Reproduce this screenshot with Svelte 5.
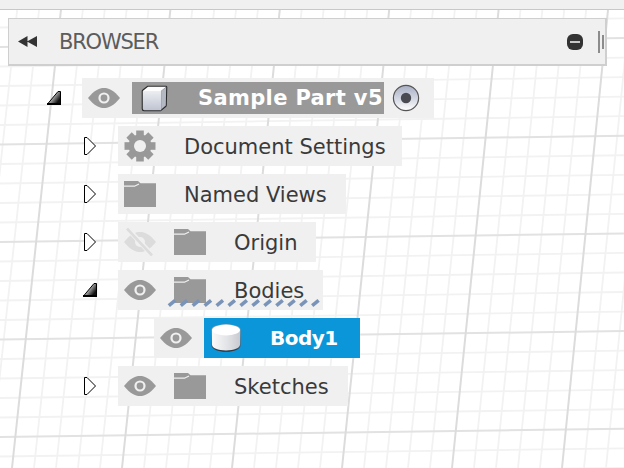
<script>
  const W = 624, H = 468;
  const vert = [];
  for (let i = -5; i <= 35; i++) {
    vert.push({ x1: 62 + (109.4 * i) / 5, y1: 0, x2: 12 + (110 * i) / 5, y2: H, major: i % 5 === 0 });
  }
  const hor = [];
  for (let i = -5; i <= 25; i++) {
    hor.push({ x1: 0, y1: 47 + (97.5 * i) / 5, x2: W, y2: 38 + (97.7 * i) / 5, major: i % 5 === 0 });
  }
  const dashes = Array.from({ length: 13 }, (_, i) => 172 + i * 11.95);
  const teeth = [0, 45, 90, 135, 180, 225, 270, 315];

  const rows = [
    { id: 'docs', label: 'Document Settings', arrow: 'closed', icon: 'gear', eye: 'none', w: 284 },
    { id: 'views', label: 'Named Views', arrow: 'closed', icon: 'folder', eye: 'none', w: 228 },
    { id: 'origin', label: 'Origin', arrow: 'closed', icon: 'folder', eye: 'off', w: 198 },
    { id: 'bodies', label: 'Bodies', arrow: 'open', icon: 'folder', eye: 'on', w: 205 }
  ];
</script>

{#snippet eye()}
  <svg class="eye" width="32" height="20" viewBox="0 0 32 20" aria-hidden="true">
    <path d="M0 10 C6 2.5 11 0 16 0 C21 0 26 2.5 32 10 C26 17.5 21 20 16 20 C11 20 6 17.5 0 10 Z" fill="#999" />
    <circle cx="16" cy="10" r="5.6" fill="#f0f0f0" />
    <circle cx="16" cy="10" r="3.4" fill="#999" />
  </svg>
{/snippet}

{#snippet eyeOff()}
  <svg class="eye" width="32" height="28" viewBox="0 0 32 28" aria-hidden="true">
    <path d="M0 14 C6 6.5 11 4 16 4 C21 4 26 6.5 32 14 C26 21.5 21 24 16 24 C11 24 6 21.5 0 14 Z" fill="#dcdcdc" />
    <circle cx="16" cy="14" r="5" fill="#f0f0f0" />
    <path d="M4 1 L28 27" stroke="#f0f0f0" stroke-width="5" />
    <path d="M3 0.5 L28 27.5" stroke="#dcdcdc" stroke-width="2.6" />
  </svg>
{/snippet}

{#snippet folder()}
  <svg width="32" height="26" viewBox="0 0 32 26" aria-hidden="true">
    <path d="M0 0 H14 L16.5 2.3 H32 V26 H0 Z" fill="#999" />
    <path d="M0 5.2 H10.5 L15 3" fill="none" stroke="#f0f0f0" stroke-width="1.2" />
  </svg>
{/snippet}

{#snippet gear()}
  <svg width="32" height="32" viewBox="0 0 32 32" aria-hidden="true">
    <g fill="#999">
      <circle cx="16" cy="16" r="11.5" />
      {#each teeth as a}
        <rect x="12.2" y="0.5" width="7.6" height="6" transform="rotate({a} 16 16)" />
      {/each}
    </g>
    <circle cx="16" cy="16" r="6" fill="#f0f0f0" />
  </svg>
{/snippet}

{#snippet closedArrow()}
  <svg width="12" height="18" viewBox="0 0 12 18" aria-hidden="true">
    <path d="M0.5 0.5 H3 L11.5 9 L3 17.5 H0.5 Z" fill="#fff" stroke="#000" stroke-width="1" />
  </svg>
{/snippet}

{#snippet openArrow()}
  <svg width="14" height="14" viewBox="0 0 14 14" aria-hidden="true">
    <defs>
      <linearGradient id="tri" x1="0.1" y1="0.3" x2="0.9" y2="0.9">
        <stop offset="0.15" stop-color="#e8e8e8" />
        <stop offset="0.85" stop-color="#111" />
      </linearGradient>
    </defs>
    <path d="M0.5 13 L11 0.5 H13.5 V13.5 H0.5 Z" fill="url(#tri)" stroke="#000" stroke-width="1" />
    <rect x="0" y="12" width="14" height="2" fill="#000" />
  </svg>
{/snippet}

<div class="stage">
  <svg class="grid" width={W} height={H} viewBox="0 0 {W} {H}" aria-hidden="true">
    <defs>
      <filter id="soft" x="-5%" y="-5%" width="110%" height="110%">
        <feGaussianBlur stdDeviation="0.7" />
      </filter>
    </defs>
    <g filter="url(#soft)">
      {#each vert.filter((l) => !l.major) as l}
        <line x1={l.x1} y1={l.y1} x2={l.x2} y2={l.y2} class="minor" />
      {/each}
      {#each hor.filter((l) => !l.major) as l}
        <line x1={l.x1} y1={l.y1} x2={l.x2} y2={l.y2} class="minor" />
      {/each}
      {#each hor.filter((l) => l.major) as l}
        <line x1={l.x1} y1={l.y1} x2={l.x2} y2={l.y2} class="majorh" />
      {/each}
      {#each vert.filter((l) => l.major) as l}
        <line x1={l.x1} y1={l.y1} x2={l.x2} y2={l.y2} class="major" />
      {/each}
    </g>
  </svg>

  <div class="topstrip"></div>

  <header class="browser">
    <svg class="rewind" width="19" height="11" viewBox="0 0 19 11" aria-hidden="true">
      <path d="M0 5.5 L9.5 0 V11 Z M9 5.5 L19 0 V11 Z" fill="#333" />
    </svg>
    <span class="title">BROWSER</span>
    <span class="spacer"></span>
    <span class="minus"><i></i></span>
    <span class="grip a"></span>
    <span class="grip b"></span>
  </header>

  <div class="tree">
    <div class="row root">
      <span class="arrow">{@render openArrow()}</span>
      <div class="pill rootpill">
        <span class="eyeslot">{@render eye()}</span>
        <div class="rootsel">
          <svg width="27" height="27" viewBox="0 0 27 27" aria-hidden="true">
            <defs>
              <linearGradient id="front" x1="0" y1="0" x2="0" y2="1">
                <stop offset="0" stop-color="#eceef2" />
                <stop offset="1" stop-color="#bfc4d0" />
              </linearGradient>
            </defs>
            <path d="M0.7 6 Q0.7 5 1.6 4.4 L6.5 0.8 H25 Q26.3 0.8 26.3 2 L25.8 20.6 Q25.8 21.4 25 22 L20.4 25.8 Q19.8 26.3 19 26.3 H3 Q0.7 26.3 0.7 24 Z" fill="#2a2a2a" />
            <path d="M1.8 6 L7 1.8 H25.2 L20.2 6 Z" fill="#fdfdfd" />
            <path d="M20.2 6 L25.2 1.8 L24.8 20.6 L20.2 24.6 Z" fill="#b4b8c2" />
            <path d="M1.8 6 H20.2 V25.2 H3.4 Q1.8 25.2 1.8 23.6 Z" fill="url(#front)" />
          </svg>
          <span class="rootlabel">Sample Part v5</span>
        </div>
        <svg class="radio" width="28" height="28" viewBox="0 0 28 28" aria-hidden="true">
          <defs>
            <linearGradient id="rad" x1="0" y1="0" x2="0" y2="1">
              <stop offset="0" stop-color="#a8afc4" />
              <stop offset="0.55" stop-color="#d5d9e4" />
              <stop offset="1" stop-color="#fff" />
            </linearGradient>
          </defs>
          <circle cx="14" cy="14" r="12.6" fill="url(#rad)" stroke="#555" stroke-width="1.2" />
          <circle cx="14" cy="14" r="5.2" fill="#4a4a52" />
        </svg>
      </div>
    </div>

    {#each rows as r (r.id)}
      <div class="row child">
        <span class="arrow" class:openslot={r.arrow === 'open'}>
          {#if r.arrow === 'open'}{@render openArrow()}{:else}{@render closedArrow()}{/if}
        </span>
        <div class="pill" style="width: {r.w}px">
          {#if r.eye === 'on'}
            <span class="eyeslot wide">{@render eye()}</span>
          {:else if r.eye === 'off'}
            <span class="eyeslot wide">{@render eyeOff()}</span>
          {/if}
          <span class="iconslot">
            {#if r.icon === 'gear'}{@render gear()}{:else}{@render folder()}{/if}
          </span>
          <span class="label">{r.label}</span>
        </div>
      </div>
    {/each}

    <div class="row body">
      <div class="pill bodypill">
        <span class="eyeslot">{@render eye()}</span>
        <div class="bodysel">
          <svg width="30" height="28" viewBox="0 0 30 28" aria-hidden="true">
            <defs>
              <linearGradient id="cyl" x1="0" y1="0" x2="1" y2="0">
                <stop offset="0" stop-color="#fafafa" />
                <stop offset="0.6" stop-color="#e0e1e4" />
                <stop offset="1" stop-color="#c8cad0" />
              </linearGradient>
              <linearGradient id="cylo" x1="0" y1="0" x2="0" y2="1">
                <stop offset="0" stop-color="#8fa6b8" />
                <stop offset="0.7" stop-color="#5c6b7a" />
                <stop offset="1" stop-color="#26323e" />
              </linearGradient>
            </defs>
            <path d="M0.3 6 C0.3 2.5 7 0.3 15 0.3 C23 0.3 29.7 2.5 29.7 6 V21 C29.7 25 23 27.8 15 27.8 C7 27.8 0.3 25 0.3 21 Z" fill="url(#cylo)" />
            <path d="M1 6 H29 V20.5 C29 24 23 26.4 15 26.4 C7 26.4 1 24 1 20.5 Z" fill="url(#cyl)" />
            <ellipse cx="15" cy="6" rx="14" ry="5.4" fill="#fff" />
          </svg>
          <span class="bodylabel">Body1</span>
        </div>
      </div>
    </div>

    <div class="row child">
      <span class="arrow">{@render closedArrow()}</span>
      <div class="pill" style="width: 230px">
        <span class="eyeslot wide">{@render eye()}</span>
        <span class="iconslot">{@render folder()}</span>
        <span class="label">Sketches</span>
      </div>
    </div>
  </div>

  <svg class="dashes" width="156" height="10" viewBox="0 0 156 10" aria-hidden="true">
    {#each dashes as d}
      <line x1={d - 167 - 3.2} y1="7.6" x2={d - 167 + 3.2} y2="2.4" class="dash" />
    {/each}
  </svg>
</div>

<style>
  :global(body) {
    margin: 0;
    background: #fff;
  }
  .stage {
    position: relative;
    width: 624px;
    height: 468px;
    overflow: hidden;
    background: #fff;
    font-family: "DejaVu Sans", "Open Sans", sans-serif;
  }
  .grid {
    position: absolute;
    left: 0;
    top: 0;
  }
  .minor {
    stroke: #f2f2f2;
    stroke-width: 1.8;
  }
  .major {
    stroke: #dcdcdc;
    stroke-width: 2;
  }
  .majorh {
    stroke: #e2e2e2;
    stroke-width: 2;
  }
  .topstrip {
    position: relative;
    height: 9px;
    background: #f0f0f0;
    border-bottom: 1px solid #c8c8c8;
  }
  .browser {
    position: relative;
    display: flex;
    align-items: center;
    box-sizing: border-box;
    width: 599px;
    height: 48px;
    margin: 8px 0 0 8px;
    padding: 0 1px 0 9px;
    background: #f0f0f0;
    border: 1px solid #cfcfcf;
    border-right-width: 2px;
    border-bottom-width: 2px;
  }
  .rewind {
    flex: none;
  }
  .title {
    margin-left: 22px;
    padding-top: 1px;
    font-size: 21px;
    letter-spacing: -1.2px;
    color: #5c5c5c;
    white-space: nowrap;
  }
  .spacer {
    flex: 1;
  }
  .minus {
    display: flex;
    align-items: center;
    justify-content: center;
    width: 16px;
    height: 16px;
    margin-right: 15px;
    border-radius: 6px;
    background: #333;
  }
  .minus i {
    display: block;
    width: 10px;
    height: 2px;
    background: #c8c8c8;
  }
  .grip {
    flex: none;
    width: 2px;
    background: #8c8c8c;
  }
  .grip.a {
    height: 22px;
    margin-right: 2px;
  }
  .grip.b {
    height: 14px;
  }
  .tree {
    position: relative;
    display: flex;
    flex-direction: column;
    gap: 8px;
    margin-top: 12px;
  }
  .row {
    display: flex;
    align-items: center;
    height: 40px;
  }
  .root {
    padding-left: 47px;
  }
  .root .arrow {
    width: 35px;
  }
  .child {
    padding-left: 84px;
  }
  .child .arrow {
    width: 34px;
  }
  .arrow {
    display: flex;
    align-items: center;
    flex: none;
  }
  .openslot {
    margin-left: -1px;
    width: 35px !important;
  }
  .body {
    padding-left: 154px;
  }
  .pill {
    display: flex;
    align-items: center;
    height: 40px;
    box-sizing: border-box;
    padding-left: 6px;
    background: #f0f0f0;
  }
  .rootpill {
    width: 352px;
  }
  .bodypill {
    width: 206px;
  }
  .eyeslot {
    display: flex;
    align-items: center;
    width: 44px;
    flex: none;
  }
  .eyeslot.wide {
    width: 50px;
  }
  .eye {
    display: block;
  }
  .iconslot {
    display: flex;
    align-items: center;
    width: 60px;
    flex: none;
  }
  .label {
    padding-top: 1px;
    font-size: 21px;
    color: #3a3a3a;
    white-space: nowrap;
  }
  .rootsel {
    display: flex;
    align-items: center;
    width: 252px;
    height: 32px;
    flex: none;
    padding-left: 9px;
    box-sizing: border-box;
    background: #999;
  }
  .rootlabel {
    margin-left: 30px;
    font-size: 21px;
    letter-spacing: 0.35px;
    font-weight: 700;
    color: #fff;
    white-space: nowrap;
  }
  .radio {
    margin-left: 8px;
    flex: none;
  }
  .bodysel {
    display: flex;
    align-items: center;
    width: 156px;
    height: 40px;
    flex: none;
    padding-left: 7px;
    box-sizing: border-box;
    background: #0a96d8;
  }
  .bodylabel {
    margin-left: 29px;
    font-size: 20px;
    letter-spacing: -0.5px;
    font-weight: 700;
    color: #fff;
    white-space: nowrap;
  }
  .dashes {
    position: absolute;
    left: 167px;
    top: 298px;
  }
  .dash {
    stroke: #7a93b8;
    stroke-width: 3.6;
  }
</style>
